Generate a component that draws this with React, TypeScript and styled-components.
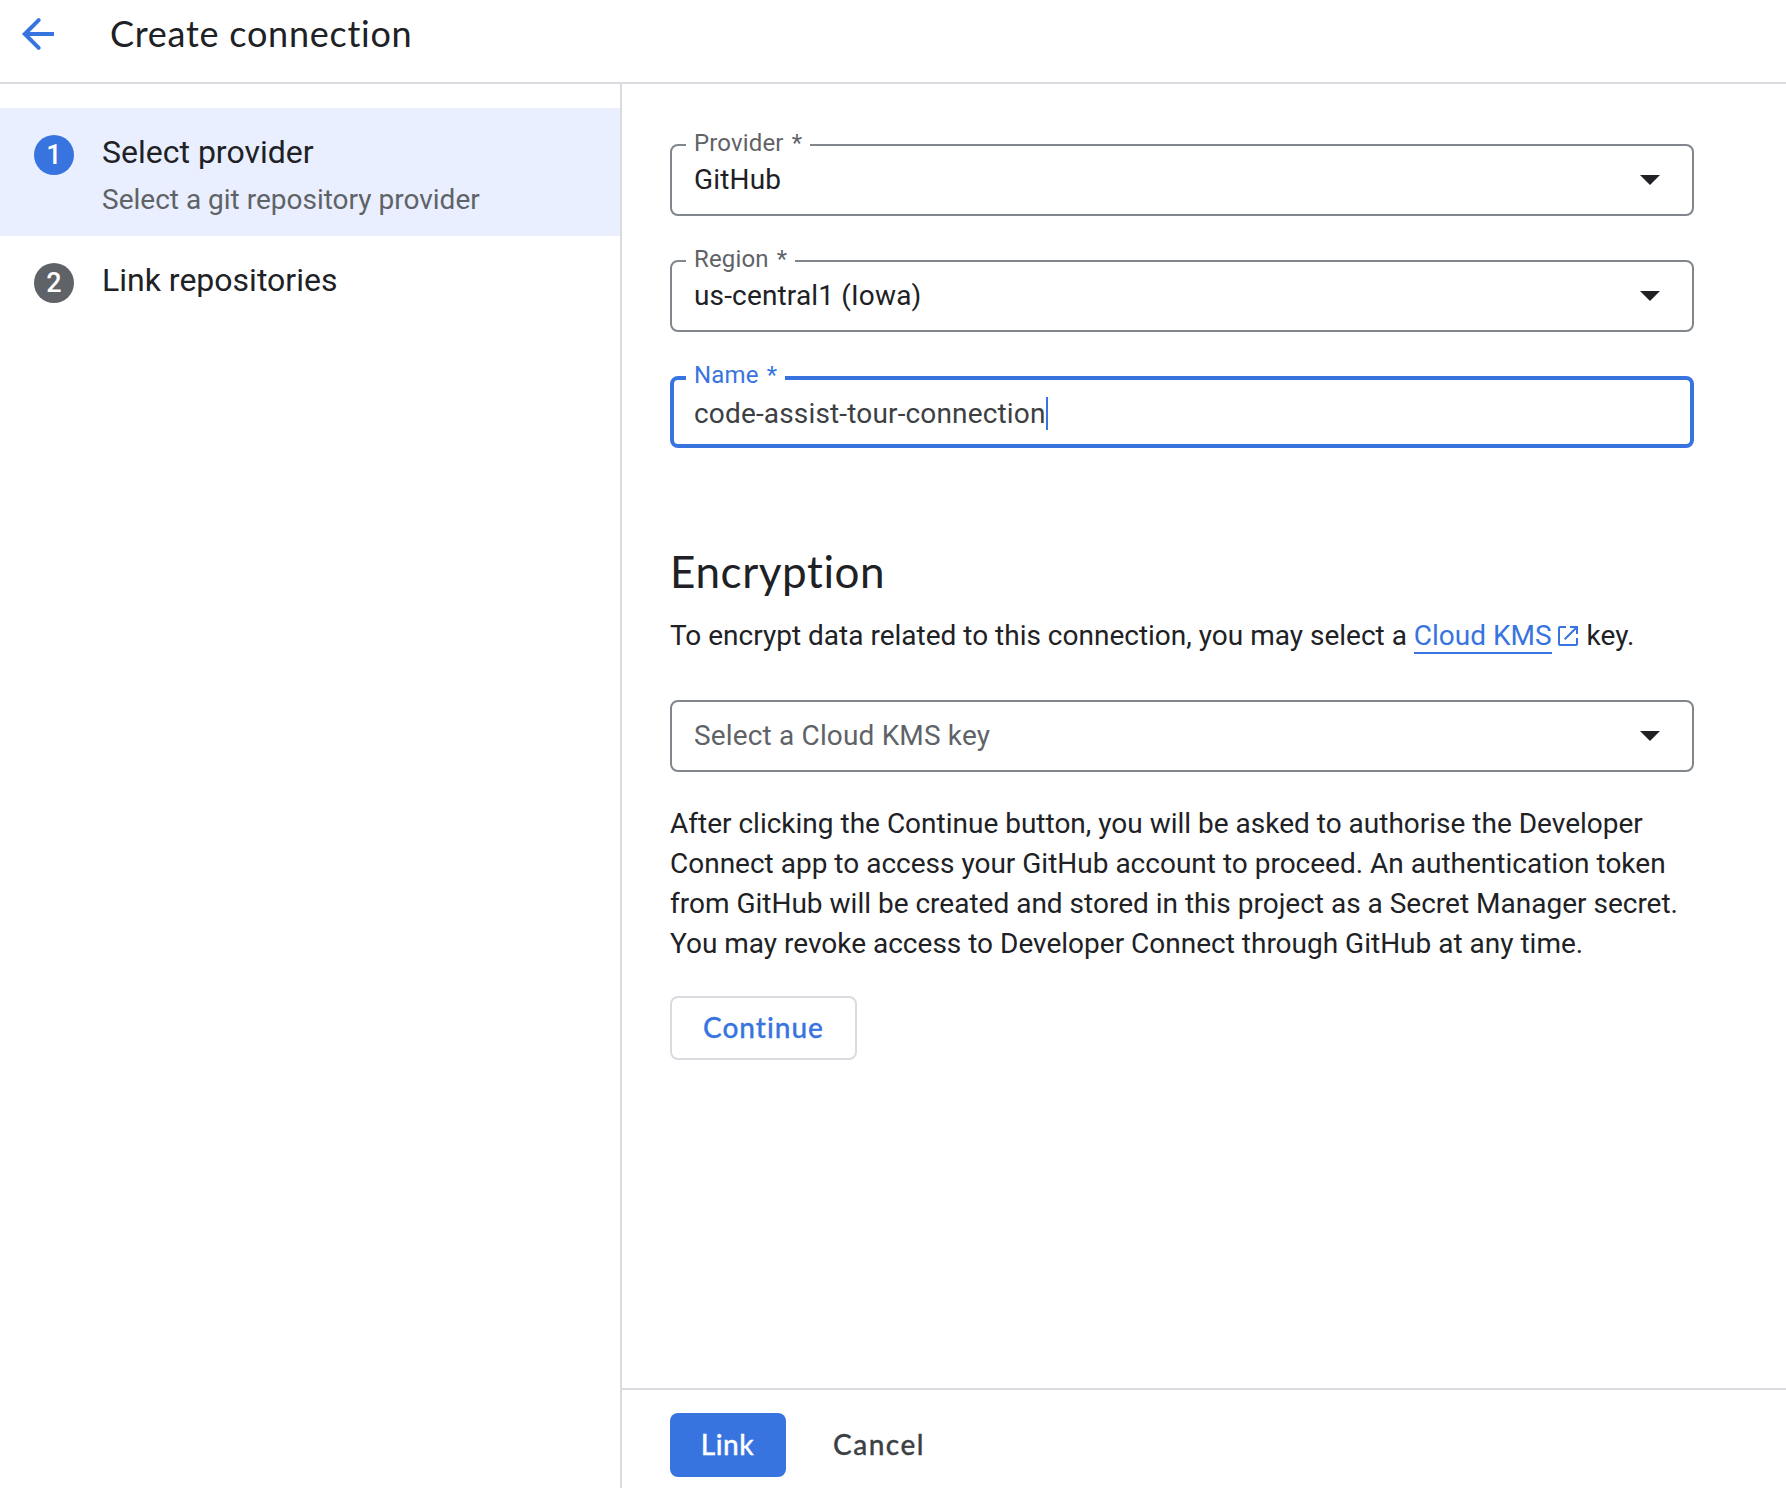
import React from "react";
import styled, { createGlobalStyle, css } from "styled-components";

const color = {
  blue: "#3874e0",
  ink: "#202125",
  body: "#3c4043",
  muted: "#5f6368",
  outline: "#80868b",
  divider: "#dadbe0",
  tint: "#e9effe",
};

const sans = `Roboto, "Liberation Sans", sans-serif`;
const display = `Lato, Roboto, sans-serif`;

const GlobalStyle = createGlobalStyle`
  *, *::before, *::after { box-sizing: border-box; }
  body {
    margin: 0;
    background: #fff;
    color: ${color.ink};
    font-family: ${sans};
    font-size: 28px;
    line-height: 40px;
  }
`;

const Page = styled.div`
  display: flex;
  flex-direction: column;
  height: 100vh;
  overflow: hidden;
`;

const Header = styled.header`
  display: flex;
  align-items: flex-start;
  flex: none;
  height: 84px;
  padding: 10px 14px 0;
  border-bottom: 2px solid ${color.divider};
`;

const BackButton = styled.button`
  display: flex;
  padding: 0;
  border: 0;
  background: none;
  color: ${color.blue};
`;

const PageTitle = styled.h1`
  margin: -1px 0 0 48px;
  font: 400 36px/48px ${display};
  font-variant-ligatures: none;
  letter-spacing: 0.75px;
`;

const Columns = styled.div`
  display: flex;
  flex: 1;
  min-height: 0;
`;

const Sidebar = styled.nav`
  flex: none;
  width: 622px;
  padding-top: 24px;
  border-right: 2px solid ${color.divider};
`;

const Step = styled.div<{ $active?: boolean }>`
  display: flex;
  gap: 28px;
  height: 128px;
  padding: 27px 34px 0;
  background: ${(p) => (p.$active ? color.tint : "transparent")};
`;

const StepNumber = styled.span<{ $active?: boolean }>`
  display: flex;
  align-items: center;
  justify-content: center;
  flex: none;
  width: 40px;
  height: 40px;
  border-radius: 50%;
  background: ${(p) => (p.$active ? color.blue : color.muted)};
  color: #fff;
  font-size: 27px;
  font-weight: 500;
`;

const StepText = styled.div`
  display: flex;
  flex-direction: column;
  gap: 8px;
  margin-top: -3px;
`;

const StepTitle = styled.span`
  font-size: 32px;
`;

const StepHint = styled.span`
  color: ${color.muted};
`;

const Main = styled.main`
  display: flex;
  flex: 1;
  flex-direction: column;
  min-width: 0;
`;

const Form = styled.form`
  display: flex;
  flex: 1;
  flex-direction: column;
  align-items: flex-start;
  padding: 60px 92px 0 48px;
`;

const FieldStack = styled.div`
  display: flex;
  flex-direction: column;
  gap: 44px;
  width: 100%;
`;

const FieldBox = styled.div<{ $focused?: boolean }>`
  position: relative;
  display: flex;
  align-items: center;
  justify-content: space-between;
  width: 100%;
  height: 72px;
  border: 2px solid ${color.outline};
  border-radius: 8px;
  padding: 0 32px 0 22px;
  letter-spacing: 0.16px;
  ${(p) =>
    p.$focused &&
    css`
      border: 4px solid ${color.blue};
      padding: 3px 30px 0 20px;
      color: ${color.body};
    `}
`;

/* Floating label: sits on the outline and hides the stretch behind it. */
const FieldLabel = styled.label<{ $focused?: boolean }>`
  position: absolute;
  top: ${(p) => (p.$focused ? "-19px" : "-17px")};
  left: ${(p) => (p.$focused ? "12px" : "14px")};
  padding: 0 8px;
  background: #fff;
  color: ${(p) => (p.$focused ? color.blue : color.muted)};
  font-size: 24px;
  line-height: 28px;
  letter-spacing: 0.15px;
  word-spacing: 2px;
`;

const FieldValue = styled.span<{ $placeholder?: boolean }>`
  display: flex;
  align-items: center;
  color: ${(p) => (p.$placeholder ? color.muted : "inherit")};
`;

const Caret = styled.span`
  width: 2px;
  height: 33px;
  background: ${color.blue};
`;

const SectionTitle = styled.h2`
  margin: 95px 0 0;
  font: 400 44px/56px ${display};
  font-variant-ligatures: none;
  letter-spacing: 0.6px;
`;

const Intro = styled.p`
  margin: 17px 0 44px;
  white-space: nowrap;
`;

const DocLink = styled.a`
  color: ${color.blue};
  text-decoration: none;
  border-bottom: 2px solid ${color.blue};
`;

const LinkIcon = styled.svg`
  margin: 0 2px 0 6px;
  vertical-align: -1px;
`;

const Notice = styled.p`
  margin: 32px 0;
  white-space: nowrap;
`;

const Button = styled.button<{ $kind: "outlined" | "filled" | "text" }>`
  height: 64px;
  padding: 0 31px 2px;
  border: 2px solid transparent;
  border-radius: 8px;
  background: none;
  color: ${color.body};
  font: 500 28px/58px ${display};
  font-variant-ligatures: none;
  letter-spacing: 1px;
  -webkit-text-stroke: 0.3px currentColor;
  ${(p) =>
    p.$kind === "outlined" &&
    css`
      width: 187px;
      padding: 0 0 2px;
      border-color: ${color.divider};
      color: ${color.blue};
    `}
  ${(p) =>
    p.$kind === "filled" &&
    css`
      width: 116px;
      padding: 0 1px 2px 0;
      background: ${color.blue};
      color: #fff;
      letter-spacing: 0.5px;
    `}
  ${(p) =>
    p.$kind === "text" &&
    css`
      letter-spacing: 1.5px;
    `}
`;

const Footer = styled.footer`
  display: flex;
  flex: none;
  gap: 14px;
  height: 100px;
  padding: 23px 48px 0;
  border-top: 2px solid ${color.divider};
`;

const BackArrow = () => (
  <svg width="48" height="48" viewBox="0 0 24 24" fill="none" stroke="currentColor" strokeWidth="2">
    <path d="M20 12H5.500" />
    <path d="M12.350 5.050L5.400 12l6.950 6.950" strokeLinecap="round" />
  </svg>
);

const DropdownArrow = () => (
  <svg width="20" height="10" viewBox="0 0 20 10" fill={color.ink}>
    <path d="M0 0h20L10 10z" />
  </svg>
);

const OpenInNew = () => (
  <LinkIcon width="20" height="20" viewBox="0 0 20 20" fill={color.blue}>
    <path d="M2 0h6v2H2v16h16v-6h2v6a2 2 0 0 1-2 2H2a2 2 0 0 1-2-2V2a2 2 0 0 1 2-2zM12 0h8v8h-2V3.4L7.4 14 6 12.600 16.600 2H12z" />
  </LinkIcon>
);

const Select = ({
  label,
  value,
  placeholder,
}: {
  label?: string;
  value?: string;
  placeholder?: string;
}) => (
  <FieldBox>
    {label && <FieldLabel>{label} *</FieldLabel>}
    <FieldValue $placeholder={!value}>{value || placeholder}</FieldValue>
    <DropdownArrow />
  </FieldBox>
);

export default function App() {
  return (
    <Page>
      <GlobalStyle />
      <Header>
        <BackButton type="button" aria-label="Back">
          <BackArrow />
        </BackButton>
        <PageTitle>Create connection</PageTitle>
      </Header>
      <Columns>
        <Sidebar>
          <Step $active>
            <StepNumber $active>1</StepNumber>
            <StepText>
              <StepTitle>Select provider</StepTitle>
              <StepHint>Select a git repository provider</StepHint>
            </StepText>
          </Step>
          <Step>
            <StepNumber>2</StepNumber>
            <StepText>
              <StepTitle>Link repositories</StepTitle>
            </StepText>
          </Step>
        </Sidebar>
        <Main>
          <Form>
            <FieldStack>
              <Select label="Provider" value="GitHub" />
              <Select label="Region" value="us-central1 (Iowa)" />
              <FieldBox $focused>
                <FieldLabel $focused>Name *</FieldLabel>
                <FieldValue>
                  code-assist-tour-connection
                  <Caret />
                </FieldValue>
              </FieldBox>
            </FieldStack>
            <SectionTitle>Encryption</SectionTitle>
            <Intro>
              To encrypt data related to this connection, you may select a{" "}
              <DocLink>Cloud KMS</DocLink>
              <OpenInNew /> key.
            </Intro>
            <Select placeholder="Select a Cloud KMS key" />
            <Notice>
              After clicking the Continue button, you will be asked to authorise the Developer
              <br />
              Connect app to access your GitHub account to proceed. An authentication token
              <br />
              from GitHub will be created and stored in this project as a Secret Manager secret.
              <br />
              You may revoke access to Developer Connect through GitHub at any time.
            </Notice>
            <Button type="button" $kind="outlined">
              Continue
            </Button>
          </Form>
          <Footer>
            <Button type="button" $kind="filled">
              Link
            </Button>
            <Button type="button" $kind="text">
              Cancel
            </Button>
          </Footer>
        </Main>
      </Columns>
    </Page>
  );
}
